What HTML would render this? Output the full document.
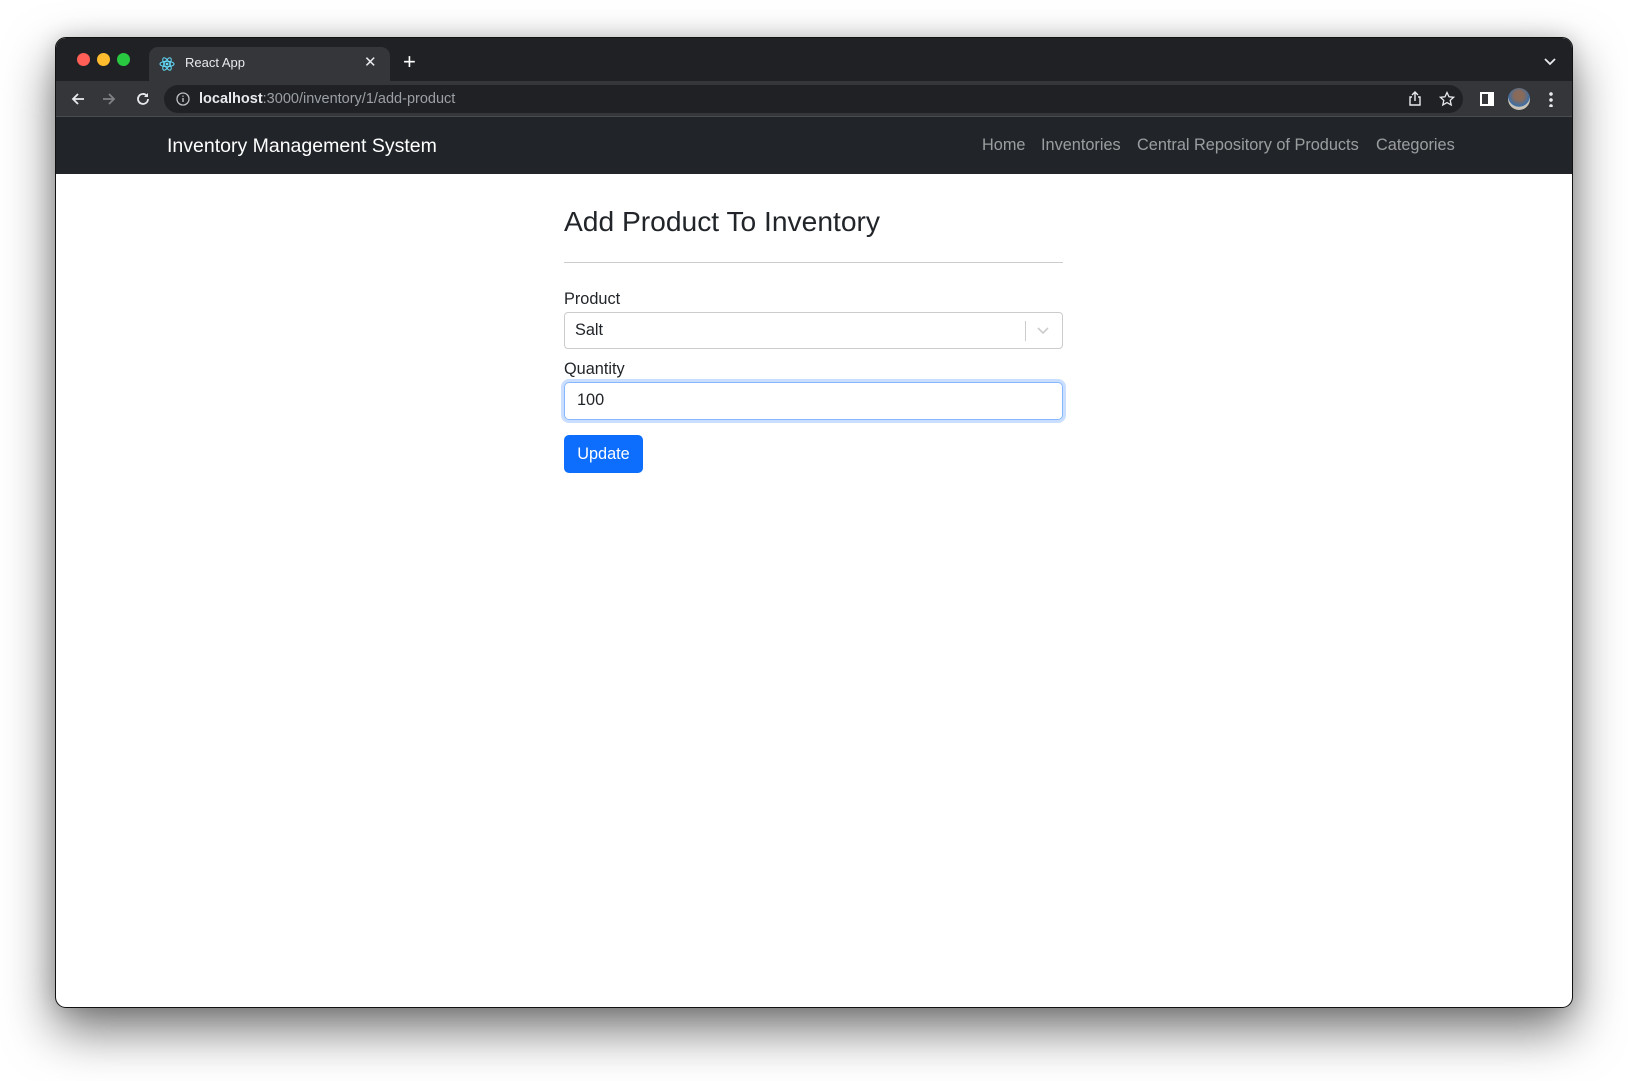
<!DOCTYPE html>
<html><head><meta charset="utf-8"><style>
*{box-sizing:border-box;margin:0;padding:0}
html,body{width:1628px;height:1081px;background:#fff;overflow:hidden;font-family:"Liberation Sans",sans-serif}
.win{position:absolute;left:55px;top:37px;width:1518px;height:971px;border-radius:11px;border:1px solid #111;background:#fff;overflow:hidden;box-shadow:0 22px 50px rgba(0,0,0,.55),0 0 20px rgba(0,0,0,.15)}
.tabs{position:absolute;left:0;top:0;right:0;height:43px;background:#202124}
.dot{position:absolute;top:15px;width:13px;height:13px;border-radius:50%}
.tab{position:absolute;left:93px;top:9px;width:241px;height:34px;background:#35363a;border-radius:9px 9px 0 0}
.bar{position:absolute;left:0;top:43px;right:0;height:36px;background:#35363a;border-bottom:1px solid #4a4b4f}
.url{position:absolute;left:108px;top:4px;width:1299px;height:28px;border-radius:14px;background:#202124}
.nav{position:absolute;left:0;top:79px;right:0;height:57px;background:#212529}
.nav a{position:absolute;top:19px;font-size:16.3px;color:rgba(255,255,255,.55);text-decoration:none}
.c{position:absolute;left:508px;top:136px;width:499px;color:#212529}
</style></head><body>
<div class="win">
<div class="tabs">
<div class="dot" style="left:21px;background:#ff5f57"></div>
<div class="dot" style="left:41px;background:#febc2e"></div>
<div class="dot" style="left:61px;background:#28c840"></div>
<div class="tab">
<svg style="position:absolute;left:10px;top:9px" width="16" height="16" viewBox="0 0 16 16"><g fill="none" stroke="#61dafb" stroke-width="1"><ellipse cx="8" cy="8" rx="7" ry="2.7"/><ellipse cx="8" cy="8" rx="7" ry="2.7" transform="rotate(60 8 8)"/><ellipse cx="8" cy="8" rx="7" ry="2.7" transform="rotate(120 8 8)"/></g><circle cx="8" cy="8" r="1.4" fill="#61dafb"/></svg>
<span style="position:absolute;left:36px;top:8px;font-size:13px;color:#e8eaed">React App</span>
<span style="position:absolute;left:215px;top:6px;font-size:15px;color:#e8eaed">✕</span>
</div>
<span style="position:absolute;left:347px;top:13px;font-size:22px;color:#fff;line-height:1">+</span>
<svg style="position:absolute;left:1488px;top:20px" width="12" height="8" viewBox="0 0 12 8"><path d="M1 1l5 5 5-5" fill="none" stroke="#e8eaed" stroke-width="1.8"/></svg>
</div>
<div class="bar">
<svg style="position:absolute;left:14px;top:10px" width="16" height="16" viewBox="0 0 16 16"><path d="M14 8H3M8 3L3 8l5 5" fill="none" stroke="#e8eaed" stroke-width="1.8"/></svg>
<svg style="position:absolute;left:45px;top:10px" width="16" height="16" viewBox="0 0 16 16"><path d="M2 8h11M8 3l5 5-5 5" fill="none" stroke="#7f8184" stroke-width="1.8"/></svg>
<svg style="position:absolute;left:79px;top:10px" width="16" height="16" viewBox="0 0 16 16"><path d="M13 8a5 5 0 1 1-1.5-3.6" fill="none" stroke="#e8eaed" stroke-width="1.8"/><path d="M13 2v4H9z" fill="#e8eaed"/></svg>
<div class="url">
<svg style="position:absolute;left:12px;top:7px" width="14" height="14" viewBox="0 0 14 14"><circle cx="7" cy="7" r="6" fill="none" stroke="#bdc1c6" stroke-width="1.3"/><path d="M7 6v4M7 3.6v1.2" stroke="#bdc1c6" stroke-width="1.4"/></svg>
<span style="position:absolute;left:35px;top:6px;font-size:14.5px;color:#9aa0a6"><b style="color:#e8eaed">localhost</b>:3000/inventory/1/add-product</span>
<svg style="position:absolute;left:1244px;top:6px" width="14" height="16" viewBox="0 0 14 16"><path d="M4 6H2v8h10V6h-2M7 10V1M4 4l3-3 3 3" fill="none" stroke="#e8eaed" stroke-width="1.4"/></svg>
<svg style="position:absolute;left:1275px;top:6px" width="16" height="16" viewBox="0 0 16 16"><path d="M8 1.5l2 4.3 4.6.5-3.4 3.1 1 4.6L8 11.6 3.8 14l1-4.6L1.4 6.3 6 5.8z" fill="none" stroke="#e8eaed" stroke-width="1.3"/></svg>
</div>
<div style="position:absolute;left:1424px;top:11px;width:14px;height:14px;border:2px solid #fff;border-right-width:6px"></div>
<div style="position:absolute;left:1452px;top:7px;width:22px;height:22px;border-radius:50%;background:radial-gradient(circle at 50% 35%,#8a6a58 25%,#3a6fa8 60%,#c9c3b8 62%)"></div>
<div style="position:absolute;left:1493px;top:10px;width:4px;height:16px;background:radial-gradient(circle,#e8eaed 1.6px,transparent 2px) 0 0/4px 6px"></div>
</div>
<div class="nav">
<span style="position:absolute;left:111px;top:18px;font-size:19.5px;color:#fff">Inventory Management System</span>
<a style="left:926px">Home</a>
<a style="left:985px">Inventories</a>
<a style="left:1081px">Central Repository of Products</a>
<a style="left:1320px">Categories</a>
</div>
<div class="c">
<div style="position:absolute;top:33px;font-size:28.2px;line-height:1">Add Product To Inventory</div>
<div style="position:absolute;top:88px;left:0;width:499px;border-top:1px solid #ccc"></div>
<div style="position:absolute;top:116px;font-size:16.3px">Product</div>
<div style="position:absolute;top:138px;width:499px;height:37px;border:1px solid #ccc;border-radius:4px">
<span style="position:absolute;left:10px;top:8px;font-size:16.3px">Salt</span>
<div style="position:absolute;left:460px;top:8px;height:20px;border-left:1px solid #ccc"></div>
<svg style="position:absolute;left:472px;top:14px" width="12" height="8" viewBox="0 0 12 8"><path d="M1 1l5 5 5-5" fill="none" stroke="#ccc" stroke-width="1.6"/></svg>
</div>
<div style="position:absolute;top:186px;font-size:16.3px">Quantity</div>
<div style="position:absolute;top:208px;width:499px;height:38px;border:1px solid #86b7fe;border-radius:5px;box-shadow:0 0 0 3px rgba(13,110,253,.22)">
<span style="position:absolute;left:12px;top:8px;font-size:16.3px">100</span>
</div>
<div style="position:absolute;top:261px;width:79px;height:38px;background:#0d6efd;border-radius:5px;color:#fff;font-size:16.3px;text-align:center;line-height:38px">Update</div>
</div>
</div>
</body></html>
